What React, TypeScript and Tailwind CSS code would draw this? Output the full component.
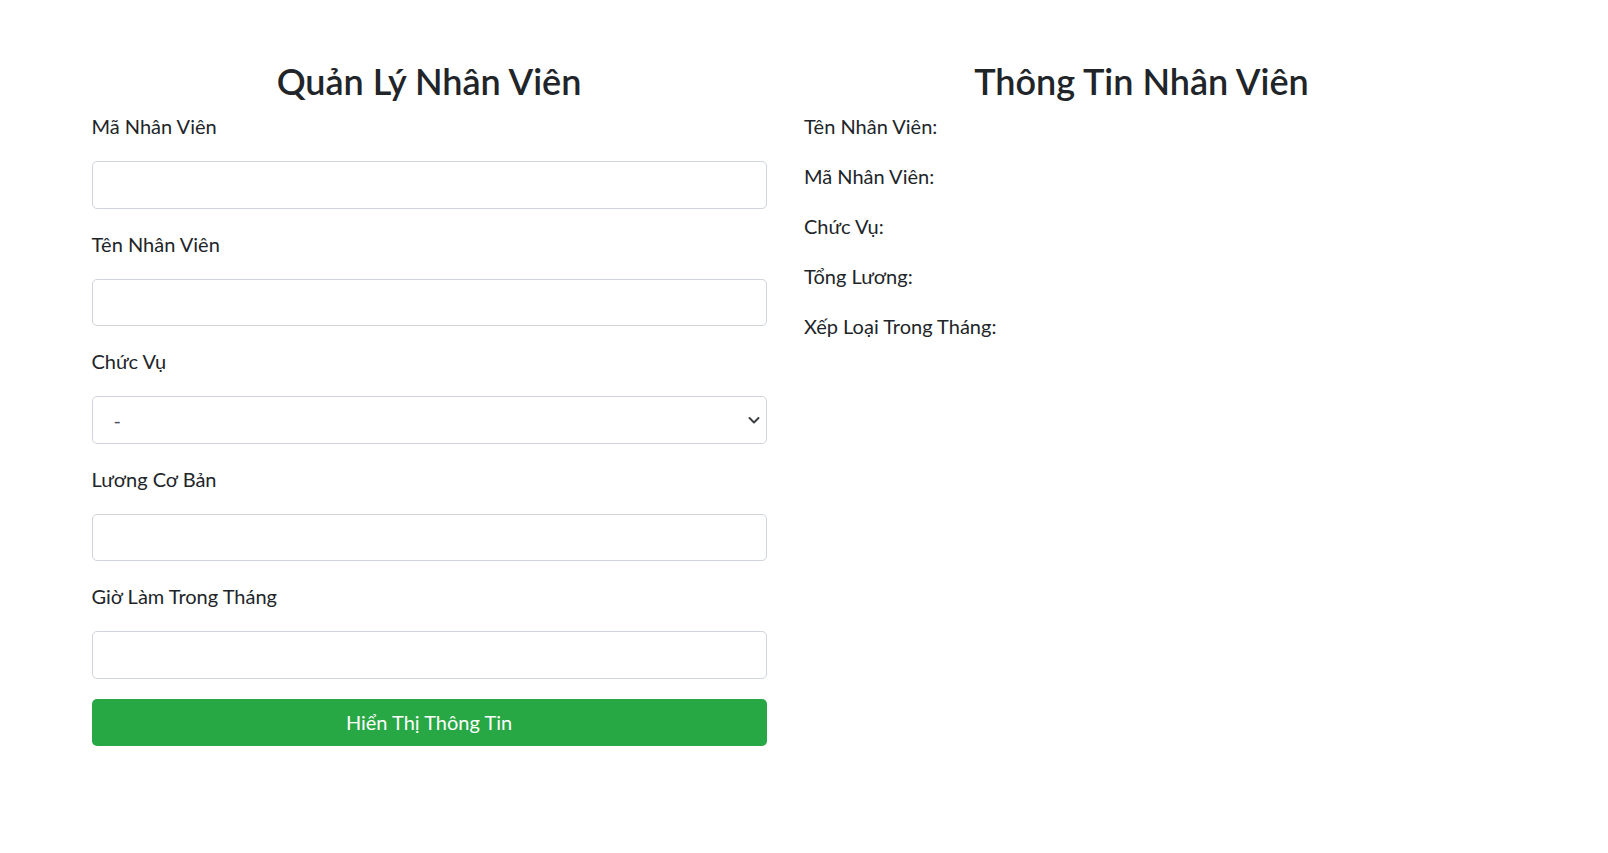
import React, { useState } from 'react';

const font = { fontFamily: 'Lato, "Noto Sans", sans-serif' };

const fields = [
  { id: 'ma', label: 'Mã Nhân Viên' },
  { id: 'ten', label: 'Tên Nhân Viên' },
  { id: 'chucvu', label: 'Chức Vụ', select: true },
  { id: 'luong', label: 'Lương Cơ Bản' },
  { id: 'gio', label: 'Giờ Làm Trong Tháng' },
];

const infoRows = ['Tên Nhân Viên:', 'Mã Nhân Viên:', 'Chức Vụ:', 'Tổng Lương:', 'Xếp Loại Trong Tháng:'];

function Field({ f }: any) {
  return (
    <div className="mb-[20px]">
      <label htmlFor={f.id} className="block h-[30px] leading-[30px] mb-[20px] text-[20px] text-[#212529]">
        {f.label}
      </label>
      {f.select ? (
        <div className="relative">
          <select
            id={f.id}
            className="block w-full h-[47.5px] appearance-none rounded-[5px] border border-[#ced4da] bg-white pl-[21px] text-[20px] text-[#495057] outline-none"
            style={font}
          >
            <option>-</option>
          </select>
          <svg
            className="absolute right-[6px] top-1/2 -translate-y-1/2 pointer-events-none"
            width="14"
            height="14"
            viewBox="0 0 14 14"
          >
            <path d="M2.5 5l4.5 4.5L11.5 5" fill="none" stroke="#3c4043" strokeWidth="2" strokeLinecap="round" strokeLinejoin="round" />
          </svg>
        </div>
      ) : (
        <input
          id={f.id}
          type="text"
          className="block w-full h-[47.5px] rounded-[5px] border border-[#ced4da] bg-white px-[15px] text-[20px] text-[#495057] outline-none"
          style={font}
        />
      )}
    </div>
  );
}

export default function App() {
  const [shown, setShown] = useState(false);

  return (
    <div className="min-h-screen bg-white text-[#212529]" style={font}>
      <div className="mx-auto w-[1425px] pt-[57px] grid grid-cols-2">
        <div className="pr-[37.5px]">
          <h2 className="h-[48px] leading-[48px] mb-[6px] text-center text-[36px] font-semibold">Quản Lý Nhân Viên</h2>
          {fields.map((f) => (
            <Field key={f.id} f={f} />
          ))}
          <button
            onClick={() => setShown(!shown)}
            className="w-full h-[47.5px] rounded-[5px] bg-[#28a745] text-white text-[20px]"
          >
            Hiển Thị Thông Tin
          </button>
        </div>
        <div className="pr-[37.5px]">
          <h2 className="h-[48px] leading-[48px] mb-[6px] text-center text-[36px] font-semibold">Thông Tin Nhân Viên</h2>
          {infoRows.map((r) => (
            <p key={r} className="leading-[30px] mb-[20px] text-[20px]">
              {r}
            </p>
          ))}
        </div>
      </div>
    </div>
  );
}
